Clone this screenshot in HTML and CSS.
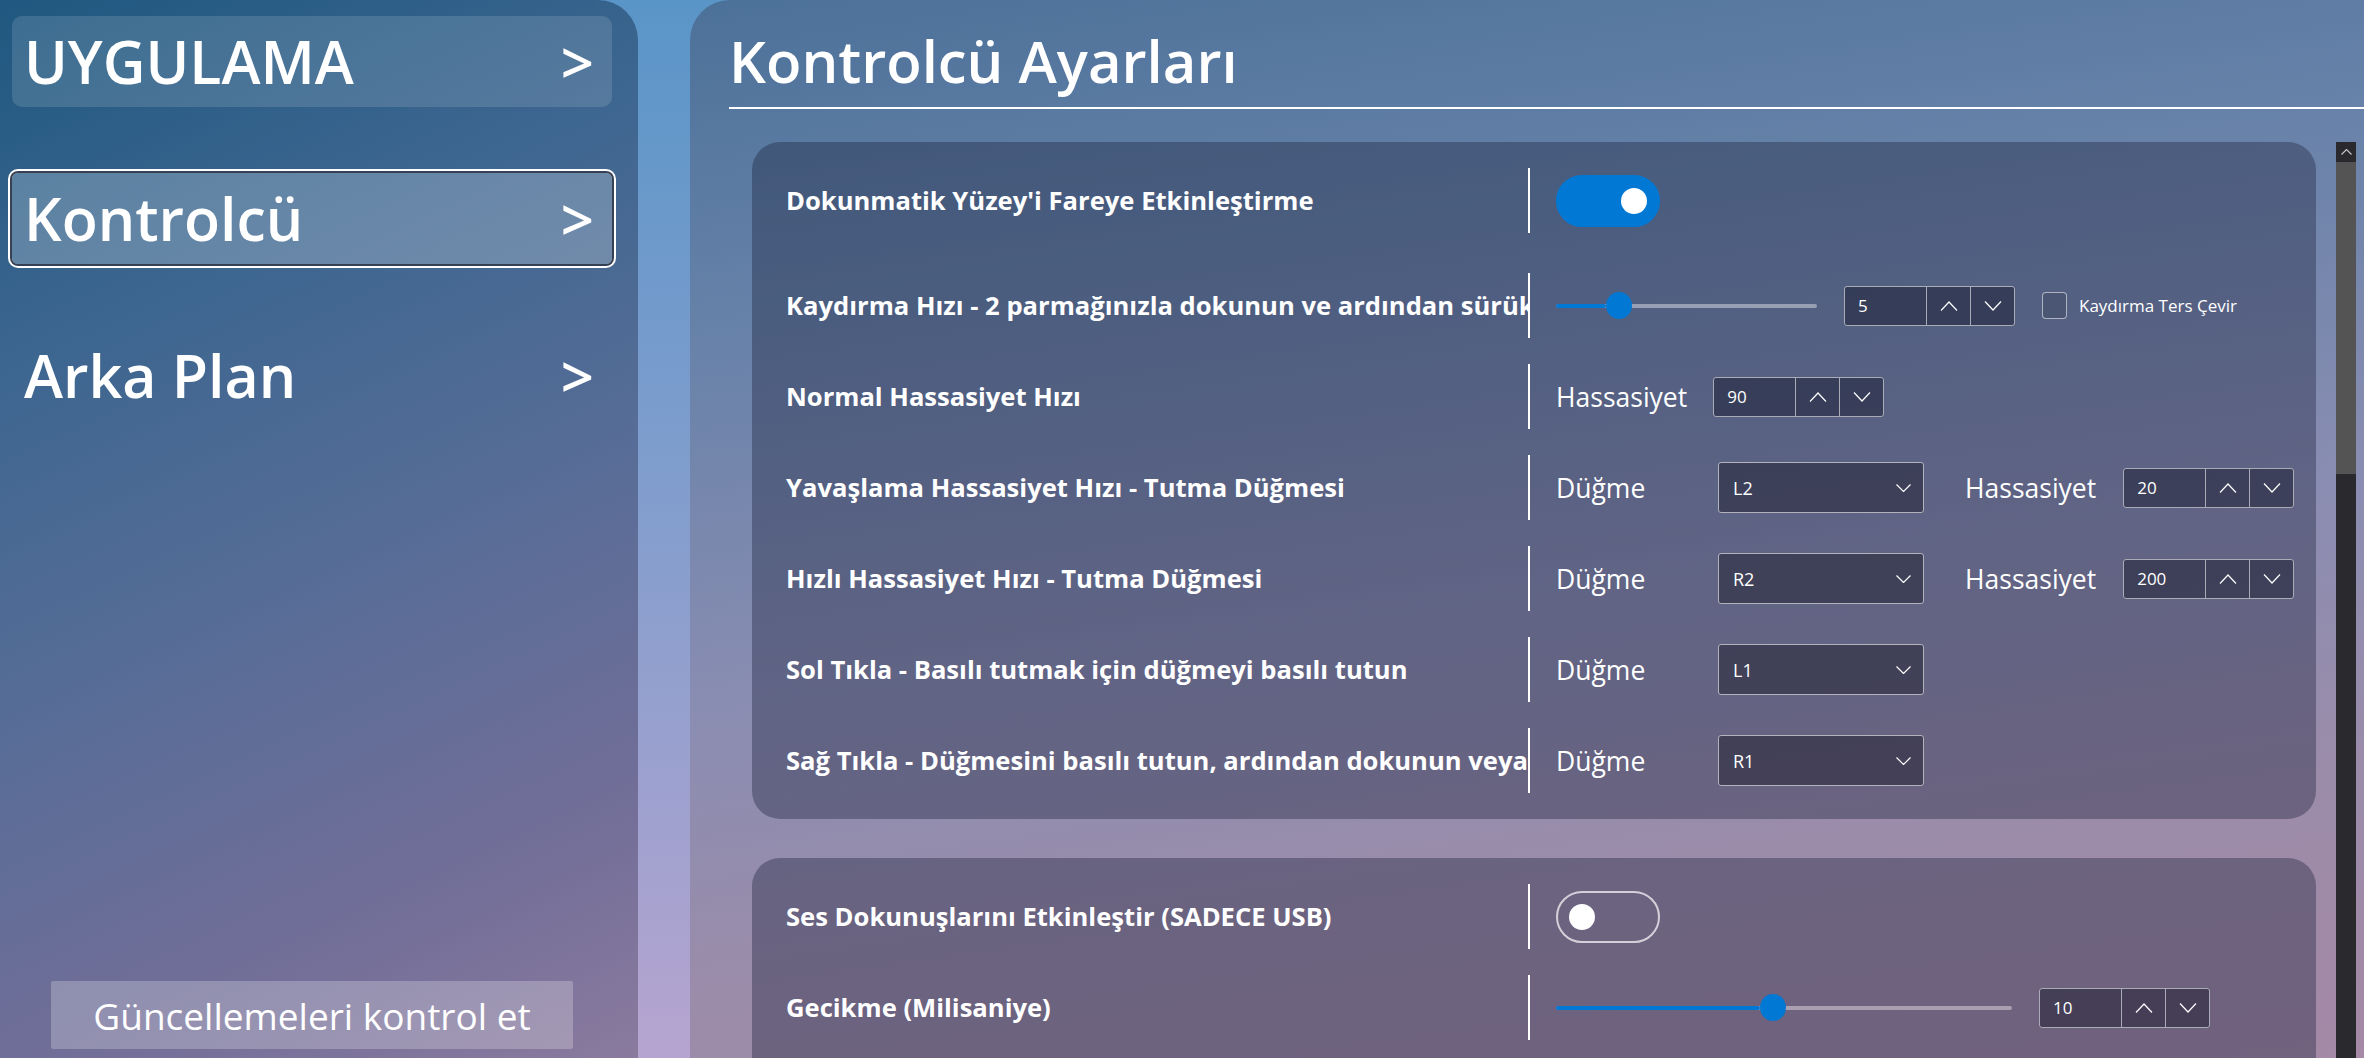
FILE: index.html
```html
<!DOCTYPE html>
<html>
<head>
    <title>Kontrolcü Ayarları</title>
    <link rel="stylesheet" href="styles.css">
</head>
<body>
    <div class="app">
        <aside class="sidebar">
            <nav class="nav">
                <a class="nav-item nav-item--plain">UYGULAMA<span class="nav-arrow">&gt;</span></a>
                <a class="nav-item nav-item--active">Kontrolcü<span class="nav-arrow">&gt;</span></a>
                <a class="nav-item">Arka Plan<span class="nav-arrow">&gt;</span></a>
            </nav>
            <button class="update-btn">Güncellemeleri kontrol et</button>
        </aside>

        <main class="content">
            <header class="page-head">
                <h1>Kontrolcü Ayarları</h1>
            </header>

            <div class="scroll-area">
                <div class="cards">
                    <!-- touchpad / mouse -->
                    <section class="card">
                        <div class="row row--first">
                            <div class="row-label">Dokunmatik Yüzey'i Fareye Etkinleştirme</div>
                            <div class="row-sep"></div>
                            <div class="row-controls">
                                <div class="toggle toggle--on"><span class="toggle-knob"></span></div>
                            </div>
                        </div>

                        <div class="row">
                            <div class="row-label">Kaydırma Hızı - 2 parmağınızla dokunun ve ardından sürükleyin</div>
                            <div class="row-sep"></div>
                            <div class="row-controls">
                                <div class="slider slider--short">
                                    <div class="slider-track"><div class="slider-fill" style="width: 50px"></div></div>
                                    <span class="slider-thumb" style="left: 50px"></span>
                                </div>
                                <div class="spin spin--gap">
                                    <span class="spin-value">5</span>
                                    <span class="spin-btn"><svg width="18" height="10" viewBox="0 0 18 10"><polyline points="1,9.5 9,1 17,9.5" /></svg></span>
                                    <span class="spin-btn"><svg width="18" height="10" viewBox="0 0 18 10"><polyline points="1,0.5 9,9 17,0.5" /></svg></span>
                                </div>
                                <label class="check">
                                    <span class="check-box"></span>
                                    <span class="check-text">Kaydırma Ters Çevir</span>
                                </label>
                            </div>
                        </div>

                        <div class="row">
                            <div class="row-label">Normal Hassasiyet Hızı</div>
                            <div class="row-sep"></div>
                            <div class="row-controls">
                                <span class="ctl-text ctl-text--tight">Hassasiyet</span>
                                <div class="spin">
                                    <span class="spin-value">90</span>
                                    <span class="spin-btn"><svg width="18" height="10" viewBox="0 0 18 10"><polyline points="1,9.5 9,1 17,9.5" /></svg></span>
                                    <span class="spin-btn"><svg width="18" height="10" viewBox="0 0 18 10"><polyline points="1,0.5 9,9 17,0.5" /></svg></span>
                                </div>
                            </div>
                        </div>

                        <div class="row">
                            <div class="row-label">Yavaşlama Hassasiyet Hızı - Tutma Düğmesi</div>
                            <div class="row-sep"></div>
                            <div class="row-controls">
                                <span class="ctl-text ctl-text--button">Düğme</span>
                                <div class="combo">
                                    <span>L2</span>
                                    <svg width="15" height="8" viewBox="0 0 15 8"><polyline points="0.5,0.5 7.5,7.5 14.5,0.5" /></svg>
                                </div>
                                <span class="ctl-text ctl-text--after-combo">Hassasiyet</span>
                                <div class="spin">
                                    <span class="spin-value">20</span>
                                    <span class="spin-btn"><svg width="18" height="10" viewBox="0 0 18 10"><polyline points="1,9.5 9,1 17,9.5" /></svg></span>
                                    <span class="spin-btn"><svg width="18" height="10" viewBox="0 0 18 10"><polyline points="1,0.5 9,9 17,0.5" /></svg></span>
                                </div>
                            </div>
                        </div>

                        <div class="row">
                            <div class="row-label">Hızlı Hassasiyet Hızı - Tutma Düğmesi</div>
                            <div class="row-sep"></div>
                            <div class="row-controls">
                                <span class="ctl-text ctl-text--button">Düğme</span>
                                <div class="combo">
                                    <span>R2</span>
                                    <svg width="15" height="8" viewBox="0 0 15 8"><polyline points="0.5,0.5 7.5,7.5 14.5,0.5" /></svg>
                                </div>
                                <span class="ctl-text ctl-text--after-combo">Hassasiyet</span>
                                <div class="spin">
                                    <span class="spin-value">200</span>
                                    <span class="spin-btn"><svg width="18" height="10" viewBox="0 0 18 10"><polyline points="1,9.5 9,1 17,9.5" /></svg></span>
                                    <span class="spin-btn"><svg width="18" height="10" viewBox="0 0 18 10"><polyline points="1,0.5 9,9 17,0.5" /></svg></span>
                                </div>
                            </div>
                        </div>

                        <div class="row">
                            <div class="row-label">Sol Tıkla - Basılı tutmak için düğmeyi basılı tutun</div>
                            <div class="row-sep"></div>
                            <div class="row-controls">
                                <span class="ctl-text ctl-text--button">Düğme</span>
                                <div class="combo">
                                    <span>L1</span>
                                    <svg width="15" height="8" viewBox="0 0 15 8"><polyline points="0.5,0.5 7.5,7.5 14.5,0.5" /></svg>
                                </div>
                            </div>
                        </div>

                        <div class="row">
                            <div class="row-label">Sağ Tıkla - Düğmesini basılı tutun, ardından dokunun veya tıklayın</div>
                            <div class="row-sep"></div>
                            <div class="row-controls">
                                <span class="ctl-text ctl-text--button">Düğme</span>
                                <div class="combo">
                                    <span>R1</span>
                                    <svg width="15" height="8" viewBox="0 0 15 8"><polyline points="0.5,0.5 7.5,7.5 14.5,0.5" /></svg>
                                </div>
                            </div>
                        </div>
                    </section>

                    <!-- audio haptics -->
                    <section class="card card--open">
                        <div class="row">
                            <div class="row-label">Ses Dokunuşlarını Etkinleştir (SADECE USB)</div>
                            <div class="row-sep"></div>
                            <div class="row-controls">
                                <div class="toggle"><span class="toggle-knob"></span></div>
                            </div>
                        </div>

                        <div class="row">
                            <div class="row-label">Gecikme (Milisaniye)</div>
                            <div class="row-sep"></div>
                            <div class="row-controls">
                                <div class="slider slider--long">
                                    <div class="slider-track"><div class="slider-fill" style="width: 204px"></div></div>
                                    <span class="slider-thumb" style="left: 204px"></span>
                                </div>
                                <div class="spin spin--gap">
                                    <span class="spin-value">10</span>
                                    <span class="spin-btn"><svg width="18" height="10" viewBox="0 0 18 10"><polyline points="1,9.5 9,1 17,9.5" /></svg></span>
                                    <span class="spin-btn"><svg width="18" height="10" viewBox="0 0 18 10"><polyline points="1,0.5 9,9 17,0.5" /></svg></span>
                                </div>
                            </div>
                        </div>
                    </section>
                </div>

                <div class="scrollbar">
                    <div class="sb-arrow"><svg width="11" height="6" viewBox="0 0 11 6"><polyline points="0.5,5.5 5.5,0.5 10.5,5.5" /></svg></div>
                    <div class="sb-thumb"></div>
                </div>
            </div>
        </main>
    </div>
</body>
</html>
```

FILE: styles.css
```css
* {
    box-sizing: border-box;
}
html, body {
    margin: 0;
    padding: 0;
}
body {
    width: 2364px;
    height: 1058px;
    overflow: hidden;
    font-family: "Open Sans", "Noto Sans", sans-serif;
    color: #fff;
    background: linear-gradient(180deg, #5a95c8 0%, #7e9dcd 43%, #b6a4d0 100%);
}
.app {
    display: flex;
    gap: 52px;
    height: 100%;
}

/* ---------- sidebar ---------- */
.sidebar {
    width: 638px;
    flex-shrink: 0;
    display: flex;
    flex-direction: column;
    padding: 16px 26px 9px 12px;
    border-top-right-radius: 40px;
    background: linear-gradient(155deg, #1f5880 0%, #3d6690 28%, #586d97 55%, #716e98 80%, #8a7a9e 100%);
}
.nav {
    display: flex;
    flex-direction: column;
    gap: 66px;
}
.nav-item {
    height: 91px;
    display: flex;
    align-items: center;
    justify-content: space-between;
    padding: 0 18px 0 12px;
    border-radius: 10px;
    font-size: 59px;
    font-weight: 600;
    line-height: 1;
    color: #fff;
}
.nav-item--plain {
    background: rgba(255, 255, 255, 0.13);
}
.nav-item--active {
    background: rgba(255, 255, 255, 0.22);
    border-radius: 6px;
    box-shadow: 0 0 0 2px rgba(20, 32, 55, 0.85), 0 0 0 4px #fff;
}
.nav-arrow {
    font-size: 58px;
}
.update-btn {
    margin-top: auto;
    align-self: center;
    width: 522px;
    height: 68px;
    border: none;
    border-radius: 2px;
    background: rgba(255, 255, 255, 0.24);
    color: #fff;
    font-family: inherit;
    font-size: 37px;
    padding: 0;
}

/* ---------- main panel ---------- */
.content {
    flex: 1;
    min-width: 0;
    display: flex;
    flex-direction: column;
    overflow: hidden;
    border-top-left-radius: 40px;
    background: linear-gradient(172deg, #4c7199 0%, #6581a8 24%, #8a8db2 55%, #9a8caa 76%, #a589a6 100%);
}
.page-head {
    margin-left: 39px;
    padding: 32px 0 18px;
    border-bottom: 2px solid #fff;
}
.page-head h1 {
    margin: 0;
    font-size: 58px;
    font-weight: 600;
    line-height: 57px;
}
.scroll-area {
    flex: 1;
    min-height: 0;
    display: flex;
    gap: 20px;
    margin-top: 33px;
    padding: 0 8px 0 62px;
}
.cards {
    flex: 1;
    display: flex;
    flex-direction: column;
    gap: 39px;
}
.card {
    border-radius: 28px;
    background: rgba(30, 35, 60, 0.38);
    padding: 26px 0 26px 34px;
    display: flex;
    flex-direction: column;
    gap: 26px;
}
.card--open {
    padding-bottom: 60px;
}
.row {
    height: 65px;
    display: flex;
    align-items: center;
}
.row--first {
    margin-bottom: 14px;
}
.row-label {
    width: 742px;
    flex-shrink: 0;
    white-space: nowrap;
    overflow: hidden;
    font-size: 25.6px;
    font-weight: 700;
}
.row-sep {
    width: 2px;
    height: 65px;
    background: #fff;
    flex-shrink: 0;
}
.row-controls {
    display: flex;
    align-items: center;
    padding-left: 26px;
}

/* toggle */
.toggle {
    width: 104px;
    height: 52px;
    border-radius: 26px;
    border: 2px solid rgba(255, 255, 255, 0.7);
    display: flex;
    align-items: center;
    padding: 0 11px;
}
.toggle--on {
    background: #0078d4;
    border-color: #0078d4;
    justify-content: flex-end;
}
.toggle-knob {
    width: 26px;
    height: 26px;
    border-radius: 50%;
    background: #fff;
}

/* slider */
.slider {
    position: relative;
    height: 27px;
    display: flex;
    align-items: center;
}
.slider--short {
    width: 261px;
}
.slider--long {
    width: 456px;
}
.slider-track {
    width: 100%;
    height: 4px;
    border-radius: 2px;
    background: rgba(255, 255, 255, 0.4);
}
.slider-fill {
    height: 100%;
    border-radius: 2px;
    background: #0078d4;
}
.slider-thumb {
    position: absolute;
    top: 0;
    width: 26px;
    height: 27px;
    border-radius: 50%;
    background: #0078d4;
}

/* number box */
.spin {
    display: flex;
    height: 40px;
    border: 1px solid #a9abb6;
    border-radius: 3px;
    background: rgba(18, 20, 38, 0.45);
}
.spin--gap {
    margin-left: 27px;
}
.spin-value {
    width: 81px;
    padding-left: 13px;
    font-size: 17px;
    line-height: 38px;
}
.spin-btn {
    width: 44px;
    border-left: 1px solid #a9abb6;
    display: flex;
    align-items: center;
    justify-content: center;
}
.spin-btn svg polyline,
.combo svg polyline,
.sb-arrow svg polyline {
    fill: none;
    stroke: #fff;
    stroke-width: 1.2;
}

/* combo box */
.combo {
    width: 206px;
    height: 51px;
    display: flex;
    align-items: center;
    justify-content: space-between;
    padding: 0 12px 0 14px;
    border: 1px solid #b2b3bd;
    border-radius: 3px;
    background: rgba(22, 22, 36, 0.45);
    font-size: 18px;
}

/* plain control text */
.ctl-text {
    font-size: 26.5px;
}
.ctl-text--tight {
    margin-right: 26px;
}
.ctl-text--button {
    width: 162px;
}
.ctl-text--after-combo {
    margin: 0 27px 0 41px;
}

/* checkbox */
.check {
    display: flex;
    align-items: center;
    margin-left: 27px;
}
.check-box {
    width: 25px;
    height: 27px;
    border: 1.5px solid rgba(255, 255, 255, 0.55);
    border-radius: 4px;
    background: rgba(0, 0, 0, 0.1);
}
.check-text {
    margin-left: 12px;
    font-size: 17px;
}

/* scrollbar */
.scrollbar {
    width: 20px;
    flex-shrink: 0;
    background: #2a2a2e;
}
.sb-arrow {
    height: 20px;
    display: flex;
    align-items: center;
    justify-content: center;
}
.sb-arrow svg polyline {
    stroke: #c4c4c4;
}
.sb-thumb {
    height: 312px;
    background: #545454;
}
```
